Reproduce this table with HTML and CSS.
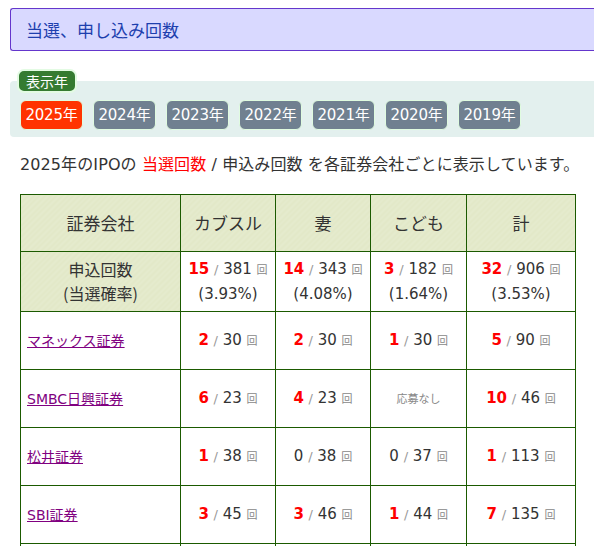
FILE: index.html
```html
<!DOCTYPE html>
<html lang="ja">
<head>
<meta charset="utf-8">
<title>当選、申し込み回数</title>
<link rel="stylesheet" href="styles.css">
</head>
<body>
<h2 class="page-title">当選、申し込み回数</h2>

<div class="year-box">
  <div class="year-label">表示年</div>
  <div class="year-list">
    <a class="year-btn active">2025年</a>
    <a class="year-btn">2024年</a>
    <a class="year-btn">2023年</a>
    <a class="year-btn">2022年</a>
    <a class="year-btn">2021年</a>
    <a class="year-btn">2020年</a>
    <a class="year-btn">2019年</a>
  </div>
</div>

<p class="intro">2025年のIPOの <span class="red">当選回数</span> / 申込み回数 を各証券会社ごとに表示しています。</p>

<table class="stats">
  <colgroup>
    <col class="c-name"><col class="c-num"><col class="c-num"><col class="c-num2"><col class="c-sum">
  </colgroup>
  <thead>
    <tr class="head-row">
      <th>証券会社</th><th>カブスル</th><th>妻</th><th>こども</th><th>計</th>
    </tr>
  </thead>
  <tbody>
    <tr class="total-row">
      <th>申込回数<br>(当選確率)</th>
      <td><span class="win">15</span> <span class="sl">/</span> 381 <span class="kai">回</span><br>(3.93%)</td>
      <td><span class="win">14</span> <span class="sl">/</span> 343 <span class="kai">回</span><br>(4.08%)</td>
      <td><span class="win">3</span> <span class="sl">/</span> 182 <span class="kai">回</span><br>(1.64%)</td>
      <td><span class="win">32</span> <span class="sl">/</span> 906 <span class="kai">回</span><br>(3.53%)</td>
    </tr>
    <tr>
      <td class="name"><a href="#">マネックス証券</a></td>
      <td><span class="win">2</span> <span class="sl">/</span> 30 <span class="kai">回</span></td>
      <td><span class="win">2</span> <span class="sl">/</span> 30 <span class="kai">回</span></td>
      <td><span class="win">1</span> <span class="sl">/</span> 30 <span class="kai">回</span></td>
      <td><span class="win">5</span> <span class="sl">/</span> 90 <span class="kai">回</span></td>
    </tr>
    <tr>
      <td class="name"><a href="#">SMBC日興証券</a></td>
      <td><span class="win">6</span> <span class="sl">/</span> 23 <span class="kai">回</span></td>
      <td><span class="win">4</span> <span class="sl">/</span> 23 <span class="kai">回</span></td>
      <td><span class="none">応募なし</span></td>
      <td><span class="win">10</span> <span class="sl">/</span> 46 <span class="kai">回</span></td>
    </tr>
    <tr>
      <td class="name"><a href="#">松井証券</a></td>
      <td><span class="win">1</span> <span class="sl">/</span> 38 <span class="kai">回</span></td>
      <td>0 <span class="sl">/</span> 38 <span class="kai">回</span></td>
      <td>0 <span class="sl">/</span> 37 <span class="kai">回</span></td>
      <td><span class="win">1</span> <span class="sl">/</span> 113 <span class="kai">回</span></td>
    </tr>
    <tr>
      <td class="name"><a href="#">SBI証券</a></td>
      <td><span class="win">3</span> <span class="sl">/</span> 45 <span class="kai">回</span></td>
      <td><span class="win">3</span> <span class="sl">/</span> 46 <span class="kai">回</span></td>
      <td><span class="win">1</span> <span class="sl">/</span> 44 <span class="kai">回</span></td>
      <td><span class="win">7</span> <span class="sl">/</span> 135 <span class="kai">回</span></td>
    </tr>
    <tr class="more-row">
      <td class="name"></td><td></td><td></td><td></td><td></td>
    </tr>
  </tbody>
</table>
</body>
</html>
```

FILE: styles.css
```css
html, body {
  margin: 0;
  padding: 0;
  background: #fff;
}
body {
  font-family: "DejaVu Sans", "Noto Sans CJK JP", sans-serif;
  color: #333;
  overflow: hidden;
}

.page-title {
  margin: 8px 0 0 10px;
  height: 41px;
  box-sizing: content-box;
  background: #d9d9ff;
  border: 1px solid #6436cc;
  border-right: none;
  border-radius: 3px 0 0 3px;
  color: #1d3fae;
  font-family: "Noto Sans CJK JP", sans-serif;
  font-weight: normal;
  font-size: 17px;
  line-height: 41px;
  padding: 0 0 0 15px;
}

.year-box {
  margin: 30px 0 0 10px;
  background: #e3f0ee;
  border-radius: 4px 0 0 4px;
  height: 56px;
  padding: 0 0 0 7px;
}
.year-label {
  display: block;
  width: fit-content;
  position: relative;
  top: -12px;
  height: 20px;
  line-height: 20px;
  padding: 0 7px;
  background: #357b31;
  border: 2px solid #e3fbe3;
  border-radius: 7px;
  color: #fff;
  font-family: "Noto Sans CJK JP", sans-serif;
  font-size: 14px;
}
.year-list {
  display: flex;
  gap: 10px;
  margin: -5px 0 0 3px;
}
.year-btn {
  display: block;
  width: 61px;
  height: 28px;
  line-height: 28px;
  text-align: center;
  background: #708090;
  border: 1px solid #e0fbe0;
  border-radius: 6px;
  color: #fff;
  font-size: 15px;
  letter-spacing: -0.2px;
  white-space: nowrap;
}
.year-btn.active {
  background: #ff3300;
}

.intro {
  margin: 16px 0 0 20px;
  font-size: 16px;
  line-height: 24px;
  color: #333;
  letter-spacing: 0.1px;
  white-space: nowrap;
}
.red {
  color: #ff0000;
}

.stats {
  margin: 17px 0 0 20px;
  width: 555px;
  border-collapse: collapse;
  table-layout: fixed;
}
.c-name { width: 160px; }
.c-num { width: 95px; }
.c-num2 { width: 96px; }
.c-sum { width: 109px; }

.stats th, .stats td {
  border: 1.5px solid #1b5a00;
  text-align: center;
  padding: 0;
}
.stats th {
  font-weight: normal;
  background: repeating-linear-gradient(135deg, #e2e8c8 0 2px, #e5ebcd 2px 4px);
}
.head-row th {
  height: 55.5px;
  font-size: 17px;
  font-family: "Noto Sans CJK JP", sans-serif;
  color: #333;
}
.total-row th {
  height: 59px;
  font-size: 16px;
  line-height: 24px;
  font-family: "Noto Sans CJK JP", sans-serif;
}
.total-row td {
  font-size: 15px;
  line-height: 24px;
}
.stats td {
  height: 57px;
  font-size: 15px;
  color: #333;
  background: #fff;
}
.stats td.name {
  text-align: left;
  padding-left: 6px;
  font-size: 14px;
}
.name a {
  color: #800080;
  text-decoration: underline;
}
.win {
  color: #ff0000;
  font-weight: bold;
}
.sl {
  color: #999;
  font-size: 13px;
}
.kai {
  color: #888;
  font-size: 11px;
  font-family: "Noto Sans CJK JP", sans-serif;
}
.none {
  color: #888;
  font-size: 11px;
  font-family: "Noto Sans CJK JP", sans-serif;
}
```
